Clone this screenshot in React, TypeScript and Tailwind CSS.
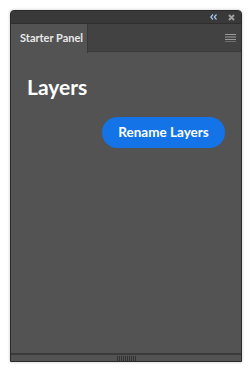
import React from 'react';

const App: React.FC = () => {
  return (
    <div className="w-[251px] h-[372px] bg-white p-[10px]" style={{ fontFamily: 'Lato, "Open Sans", sans-serif' }}>
      <div className="w-[232px] h-[352px] flex flex-col rounded-t-[4px] border border-[#2b2b2b] bg-[#535353] shadow-[0_0_3px_rgba(0,0,0,0.25)] overflow-hidden">
        {/* title bar */}
        <div className="h-[13px] bg-[#393939] border-b border-[#2e2e2e] flex items-center justify-end pr-[6px] gap-[11px]">
          <svg width="7" height="6" viewBox="0 0 7 6">
            <path d="M3 0.5L0.8 3L3 5.5M6.5 0.5L4.3 3L6.5 5.5" stroke="#a9c6ee" strokeWidth="1.2" fill="none" />
          </svg>
          <svg width="7" height="7" viewBox="0 0 7 7">
            <path d="M1 1L6 6M6 1L1 6" stroke="#a0a0a0" strokeWidth="2" />
          </svg>
        </div>
        {/* tab row */}
        <div className="h-[28px] flex bg-[#424242] border-b border-[#383838]">
          <div className="w-[77px] h-[29px] bg-[#535353] border-r border-[#383838] flex items-center pl-[9px] text-[11px] font-bold text-[#e8e8e8]">
            Starter Panel
          </div>
          <div className="flex-1 flex items-center justify-end pr-[5px]">
            <svg width="11" height="8" viewBox="0 0 11 8">
              <path d="M0 0.5H11M0 3H11M0 5.5H11M0 8H11" stroke="#9a9a9a" strokeWidth="1" />
            </svg>
          </div>
        </div>
        {/* content */}
        <div className="flex-1 flex flex-col px-[16px] pt-[24px]">
          <h1 className="text-[21px] font-bold text-white leading-none">Layers</h1>
          <div className="flex justify-end mt-[20px]">
            <button className="h-[31px] w-[123px] rounded-full bg-[#1473e6] text-white text-[13.5px] font-bold">
              Rename Layers
            </button>
          </div>
        </div>
        {/* gripper */}
        <div className="h-[8px] border-t-2 border-[#3a3a3a] bg-[#535353] flex items-center justify-center gap-[1px]">
          {Array.from({ length: 10 }).map((_, i) => (
            <div key={i} className="w-[1px] h-[5px] bg-[#333]" />
          ))}
        </div>
      </div>
    </div>
  );
};

export default App;
